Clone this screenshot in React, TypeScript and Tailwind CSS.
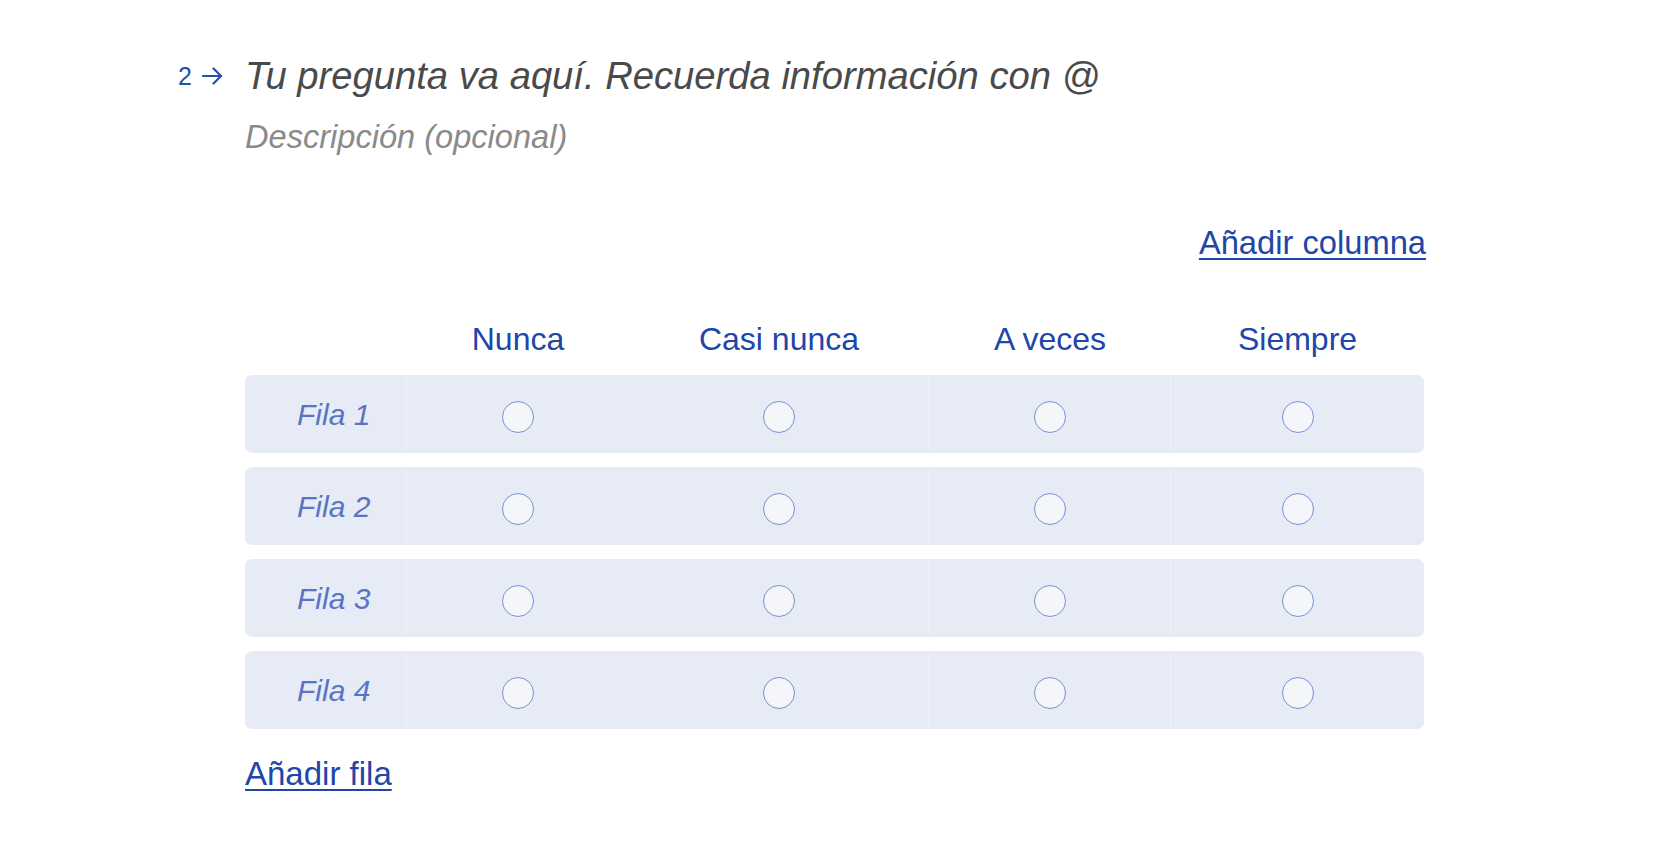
import React from "react"

const columns = ["Nunca", "Casi nunca", "A veces", "Siempre"]
const rows = ["Fila 1", "Fila 2", "Fila 3", "Fila 4"]

const grid = "grid grid-cols-[162px_222px_300px_242px_253px]"

function Radio() {
  return <span className="block h-[32px] w-[32px] rounded-full border-[1.5px] border-[#7791d5] bg-[#f4f6fa]" />
}

export default function App() {
  return (
    <div className="min-h-screen bg-white font-['Liberation_Sans',Arial,sans-serif]">
      <div className="flex pl-[178px] pt-[54px]">
        {/* question number */}
        <div className="flex h-[44px] w-[67px] items-center gap-[9px] text-[#2a4db0]">
          <span className="text-[25px] leading-none">2</span>
          <svg width="22" height="18" viewBox="0 0 22 18" fill="none" stroke="currentColor" strokeWidth="2.2" strokeLinecap="round" strokeLinejoin="round">
            <path d="M2 9h18" />
            <path d="M12.5 1.5 20 9l-7.5 7.5" />
          </svg>
        </div>

        <div className="w-[1179px]">
          <h1 className="text-[38.2px] italic leading-[44px] text-[#4a4a4a]">
            Tu pregunta va aquí. Recuerda información con @
          </h1>
          <p className="mt-[19px] text-[32.6px] italic leading-[40px] text-[#8a8a8a]">Descripción (opcional)</p>

          <div className="mt-[66px] flex justify-end">
            <a href="#" className="-mr-[2px] text-[32.7px] leading-[40px] text-[#2046a8] underline decoration-2 underline-offset-[4px]">
              Añadir columna
            </a>
          </div>

          <div className={`${grid} mt-[56px] text-[32px] leading-[40px] text-[#2046a8]`}>
            <div />
            {columns.map((c) => (
              <div key={c} className="text-center">
                {c}
              </div>
            ))}
          </div>

          <div className="mt-[16px] flex flex-col gap-[14px]">
            {rows.map((r) => (
              <div key={r} className={`${grid} h-[78px] overflow-hidden rounded-[7px] bg-[#e7ebf6]`}>
                <div className="flex items-center border-r border-[#eef1f9] pl-[52px] text-[30px] italic text-[#5874c2]">
                  {r}
                </div>
                {columns.map((c, i) => (
                  <div
                    key={c}
                    className={`flex items-center justify-center pt-[6px] ${i === 1 || i === 2 ? "border-r border-[#eef1f9]" : ""}`}
                  >
                    <Radio />
                  </div>
                ))}
              </div>
            ))}
          </div>

          <div className="mt-[25px]">
            <a href="#" className="text-[33px] leading-[40px] text-[#2046a8] underline decoration-2 underline-offset-[4px]">
              Añadir fila
            </a>
          </div>
        </div>
      </div>
    </div>
  )
}
